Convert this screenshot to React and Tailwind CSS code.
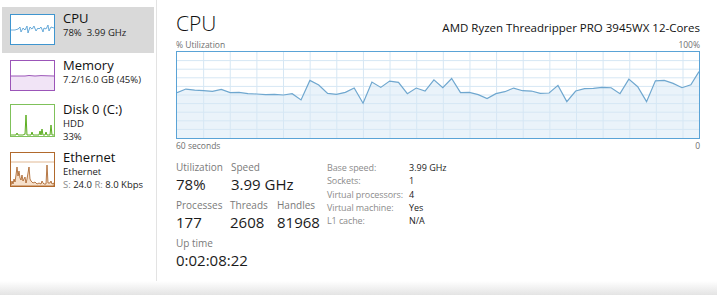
import React from "react";

// CPU history, sampled from the reference (x 47..1520, y 45..305 in zoom units)
const cpuPoints = [
  [47, 168], [72, 157], [97, 160], [122, 162], [147, 164], [172, 158], [197, 168],
  [222, 167], [247, 171], [272, 172], [297, 174], [322, 173], [347, 175], [372, 171],
  [397, 190], [422, 131], [447, 145], [472, 170], [497, 173], [522, 167], [547, 154],
  [572, 200], [597, 136], [622, 152], [647, 133], [672, 137], [697, 171], [722, 154],
  [747, 163], [772, 129], [797, 153], [822, 125], [847, 168], [872, 167], [897, 174],
  [922, 186], [947, 171], [972, 165], [997, 154], [1022, 162], [1047, 163], [1072, 170],
  [1097, 169], [1122, 146], [1147, 195], [1172, 163], [1197, 156], [1222, 155],
  [1247, 152], [1272, 153], [1297, 171], [1322, 127], [1347, 150], [1372, 195],
  [1397, 132], [1422, 131], [1447, 140], [1472, 153], [1497, 144], [1520, 104],
];

const GW = 522;
const GH = 86;

const CpuGraph = () => {
  const pts = cpuPoints.map(([x, y]) => [
    ((x - 47) / 1473) * GW,
    ((y - 45) / 260) * GH,
  ]);
  const line = pts.map((p) => p.join(",")).join(" ");
  const area = `0,${GH} ${line} ${GW},${GH}`;
  const colW = GW / 19.6;
  return (
    <svg width={GW} height={GH} className="block">
      <polygon points={area} fill="#eaf3fa" />
      {Array.from({ length: 9 }).map((_, i) => (
        <line
          key={"h" + i}
          x1="0"
          x2={GW}
          y1={(GH / 10) * (i + 1)}
          y2={(GH / 10) * (i + 1)}
          stroke="#d6e7f4"
          strokeWidth="1"
        />
      ))}
      {Array.from({ length: 19 }).map((_, i) => (
        <line
          key={"v" + i}
          y1="0"
          y2={GH}
          x1={colW * (i + 1)}
          x2={colW * (i + 1)}
          stroke="#d6e7f4"
          strokeWidth="1"
        />
      ))}
      <polyline points={line} fill="none" stroke="#6fa7cf" strokeWidth="1.2" />
    </svg>
  );
};

const CpuThumb = () => (
  <div className="w-[45px] h-[31px] border border-[#3f95cf] bg-white">
    <svg width="43" height="29" className="block">
      <polyline
        points="0,15 4,15 7,14 9,12 10,17 12,13 14,15 16,11 17,18 19,12 21,14 23,11 25,16 27,13 28,14 30,12 32,17 33,13 35,14 37,10 38,16 40,12 43,13"
        fill="#eaf3fa"
        stroke="#4b9bd2"
        strokeWidth="0.8"
      />
    </svg>
  </div>
);

const MemThumb = () => (
  <div className="w-[45px] h-[31px] border border-[#9b55b8] bg-white">
    <svg width="43" height="29" className="block">
      <rect x="0" y="15" width="43" height="14" fill="#f1e4f6" />
      <polyline
        points="0,15 14,15 18,14.5 24,15 30,14.6 43,15"
        fill="none"
        stroke="#9b55b8"
        strokeWidth="1"
      />
    </svg>
  </div>
);

const DiskThumb = () => (
  <div className="w-[45px] h-[33px] border border-[#7fc15a] bg-white">
    <svg width="43" height="31" className="block">
      <polyline
        points="0,30 5,30 6,28 7,30 12,30 14,29 15,10 16,30 20,30 21,27 22,30 28,30 29,26 30,30 31,24 32,30 34,30 35,27 36,30 39,30 40,20 41,30 43,30"
        fill="#e4f2da"
        stroke="#4da60c"
        strokeWidth="0.9"
      />
    </svg>
  </div>
);

const EthThumb = () => (
  <div className="w-[45px] h-[35px] border border-[#b1692c] bg-white">
    <svg width="43" height="33" className="block">
      <line x1="0" x2="43" y1="9" y2="9" stroke="#d9a77a" strokeWidth="0.8" />
      <polyline
        points="0,32 1,28 2,31 3,26 4,29 5,22 6,14 7,23 8,18 9,25 10,27 11,22 12,28 14,24 15,30 16,26 17,20 18,14 19,26 20,28 22,30 24,29 26,31 28,30 30,31 31,28 32,30 33,31 35,31 36,12 37,30 39,30 40,28 41,31 43,30 43,33 0,33"
        fill="#f6e0cb"
        stroke="#a55b1f"
        strokeWidth="0.8"
      />
    </svg>
  </div>
);

const SideItem = ({ thumb, active, pt = "pt-[7px]", children }) => (
  <div
    className={`h-[46px] flex items-start gap-[8px] pl-[8px] ${pt} ${
      active ? "bg-[#d9d9d9]" : ""
    }`}
  >
    {thumb}
    <div className="flex flex-col mt-[-3px]">{children}</div>
  </div>
);

const Stat = ({ label, value, w }) => (
  <div className={`flex flex-col ${w}`}>
    <p className="text-[10px] text-[#7a7a7a] leading-[13px]">{label}</p>
    <p className="text-[15px] text-[#1b1b1b] leading-[20px]">{value}</p>
  </div>
);

const infoRows = [
  ["Base speed:", "3.99 GHz"],
  ["Sockets:", "1"],
  ["Virtual processors:", "4"],
  ["Virtual machine:", "Yes"],
  ["L1 cache:", "N/A"],
];

export default function App() {
  return (
    <div className="w-[717px] h-[295px] bg-white flex flex-col font-['Open_Sans','Noto_Sans',sans-serif] overflow-hidden">
      <div className="flex h-[281px]">
        {/* sidebar */}
        <div className="w-[157px] shrink-0 border-r border-[#e3e3e3] pt-[7px] pr-[2px] pl-[2px]">
          <SideItem active thumb={<CpuThumb />}>
            <p className="text-[13px] text-[#111] leading-[16px] mt-[-1px]">CPU</p>
            <p className="text-[9.5px] text-[#222] leading-[13px]">
              78%&nbsp; 3.99 GHz
            </p>
          </SideItem>
          <SideItem thumb={<MemThumb />}>
            <p className="text-[13px] text-[#111] leading-[16px]">Memory</p>
            <p className="text-[9.5px] text-[#222] leading-[13px]">
              7.2/16.0 GB (45%)
            </p>
          </SideItem>
          <SideItem pt="pt-[5px]" thumb={<DiskThumb />}>
            <p className="text-[13px] text-[#111] leading-[16px]">Disk 0 (C:)</p>
            <p className="text-[9.5px] text-[#222] leading-[13px]">HDD</p>
            <p className="text-[9.5px] text-[#222] leading-[13px]">33%</p>
          </SideItem>
          <SideItem thumb={<EthThumb />}>
            <p className="text-[13px] text-[#111] leading-[16px]">Ethernet</p>
            <p className="text-[9.5px] text-[#222] leading-[13px]">Ethernet</p>
            <p className="text-[9.5px] text-[#222] leading-[13px]">
              <span className="text-[#8a8a8a]">S:</span> 24.0{" "}
              <span className="text-[#8a8a8a]">R:</span> 8.0 Kbps
            </p>
          </SideItem>
        </div>

        {/* main */}
        <div className="flex-1 pl-[19px] pr-[17px] pt-[8px]">
          <div className="flex items-end justify-between">
            <p className="text-[21px] font-light text-[#111] leading-[30px]">CPU</p>
            <p className="text-[11.5px] text-[#111] leading-[16px] mb-[2px]">
              AMD Ryzen Threadripper PRO 3945WX 12-Cores
            </p>
          </div>
          <div className="flex justify-between text-[8.5px] text-[#6f6f6f] leading-[12px] mt-[1px]">
            <span>% Utilization</span>
            <span>100%</span>
          </div>
          <div className="w-[524px] border border-[#5aa3d6]">
            <CpuGraph />
          </div>
          <div className="flex justify-between text-[8.5px] text-[#6f6f6f] leading-[12px] mt-[1px]">
            <span>60 seconds</span>
            <span>0</span>
          </div>

          <div className="flex items-start mt-[9px]">
            <div className="w-[151px] flex flex-col">
              <div className="flex">
                <Stat label="Utilization" value="78%" w="w-[55px]" />
                <Stat label="Speed" value="3.99 GHz" />
              </div>
              <div className="flex mt-[5px]">
                <Stat label="Processes" value="177" w="w-[54px]" />
                <Stat label="Threads" value="2608" w="w-[47px]" />
                <Stat label="Handles" value="81968" />
              </div>
              <div className="flex mt-[5px]">
                <Stat label="Up time" value="0:02:08:22" />
              </div>
            </div>
            <div className="grid grid-cols-[82px_auto] content-start text-[9px] leading-[13.3px] whitespace-nowrap">
              {infoRows.map(([k, v]) => (
                <React.Fragment key={k}>
                  <span className="text-[#8c8c8c] tracking-[-0.1px]">{k}</span>
                  <span className="text-[#1b1b1b]">{v}</span>
                </React.Fragment>
              ))}
            </div>
          </div>
        </div>
      </div>
      <div className="flex-1 bg-gradient-to-b from-white to-[#e4e4e4]" />
    </div>
  );
}
